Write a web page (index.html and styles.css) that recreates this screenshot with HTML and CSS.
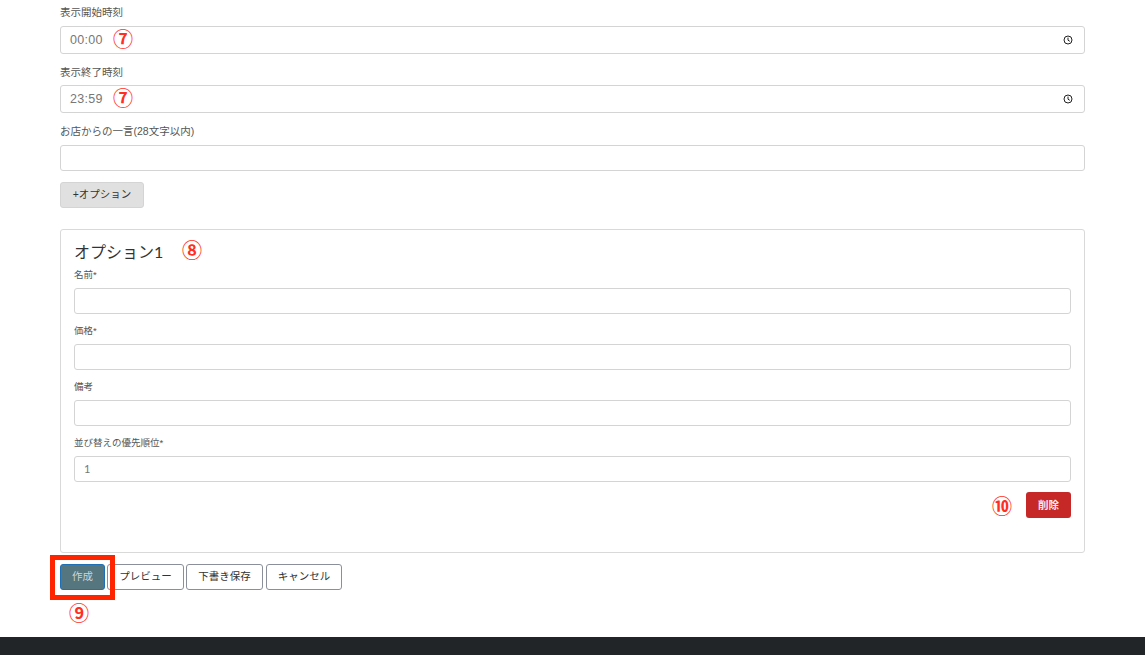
FILE: index.html
```html
<!DOCTYPE html>
<html lang="ja">
<head>
    <meta charset="UTF-8">
    <meta name="viewport" content="width=device-width, initial-scale=1.0">
    <title>オプション</title>
    <link rel="stylesheet" href="styles.css">
</head>
<body>
    <main class="page">
        <div class="form-group">
            <label>表示開始時刻</label>
            <div class="time-input">
                <span>00:00</span>
                <svg class="clock" viewBox="0 0 10 10"><circle cx="5" cy="5" r="4"/><path d="M5 2.6V5.2L6.8 6.3"/></svg>
                <span class="mark mark-time">⑦</span>
            </div>
        </div>
        <div class="form-group">
            <label>表示終了時刻</label>
            <div class="time-input">
                <span>23:59</span>
                <svg class="clock" viewBox="0 0 10 10"><circle cx="5" cy="5" r="4"/><path d="M5 2.6V5.2L6.8 6.3"/></svg>
                <span class="mark mark-time">⑦</span>
            </div>
        </div>
        <div class="form-group">
            <label>お店からの一言(28文字以内)</label>
            <input type="text" class="text-input">
        </div>
        <button type="button" class="btn btn-add">+オプション</button>

        <section class="option-card">
            <h2>オプション1<span class="mark mark-title">⑧</span></h2>
            <div class="card-group">
                <label>名前*</label>
                <input type="text" class="text-input">
            </div>
            <div class="card-group">
                <label>価格*</label>
                <input type="text" class="text-input">
            </div>
            <div class="card-group">
                <label>備考</label>
                <input type="text" class="text-input">
            </div>
            <div class="card-group">
                <label>並び替えの優先順位*</label>
                <input type="text" class="text-input" value="1">
            </div>
            <div class="card-actions">
                <span class="mark mark-delete">⑩</span>
                <button type="button" class="btn btn-delete">削除</button>
            </div>
        </section>

        <div class="actions">
            <button type="button" class="btn btn-create">作成</button>
            <button type="button" class="btn btn-outline">プレビュー</button>
            <button type="button" class="btn btn-outline">下書き保存</button>
            <button type="button" class="btn btn-outline btn-cancel">キャンセル</button>
            <span class="highlight"></span>
            <span class="mark mark-create">⑨</span>
        </div>
    </main>
    <footer class="footer"></footer>
</body>
</html>
```
FILE: styles.css
```css
* {
    margin: 0;
    padding: 0;
    box-sizing: border-box;
}

html, body {
    height: 655px;
    overflow: hidden;
}

body {
    font-family: Lato, "Noto Sans CJK JP", sans-serif;
    background: white;
    color: #333;
}

.page {
    padding: 5.4px 60px 0;
}

label {
    display: block;
    height: 14px;
    line-height: 14px;
    margin-bottom: 6.6px;
    font-family: "Liberation Sans", "Noto Sans CJK JP", sans-serif;
    font-size: 10.5px;
    color: #555;
}

.form-group {
    margin-bottom: 10.8px;
}

.time-input {
    position: relative;
    display: flex;
    align-items: center;
    justify-content: space-between;
    height: 28px;
    padding: 0 11px 0 9px;
    border: 1px solid #d4d4d4;
    border-radius: 3px;
    font-family: "Liberation Sans", sans-serif;
    font-size: 12.5px;
    letter-spacing: 0.3px;
    color: #777;
}

.clock {
    width: 10px;
    height: 10px;
    fill: none;
    stroke: #222;
    stroke-width: 1;
}

.text-input {
    display: block;
    width: 100%;
    height: 26px;
    padding: 0 9px;
    border: 1px solid #d4d4d4;
    border-radius: 3px;
    font-family: Lato, "Noto Sans CJK JP", sans-serif;
    font-size: 11px;
    color: #777;
    outline: none;
}

.btn {
    height: 26px;
    padding-bottom: 3px;
    border: 1px solid transparent;
    border-radius: 3px;
    background: white;
    font-family: Lato, "Noto Sans CJK JP", sans-serif;
    font-size: 10.5px;
    color: #333;
}

.btn-add {
    display: block;
    width: 84px;
    background: #e0e0e0;
    border-color: #d4d4d4;
}

.option-card {
    height: 324px;
    margin-top: 21px;
    padding: 8px 13px 0;
    border: 1px solid #d9d9d9;
    border-radius: 3px;
}

.option-card h2 {
    position: relative;
    height: 30px;
    line-height: 28px;
    font-size: 16px;
    font-weight: 400;
    color: #333;
}

.card-group {
    margin-bottom: 10px;
}

.card-group label {
    height: 13px;
    line-height: 13px;
    margin-bottom: 7px;
    font-size: 9.5px;
}

.card-actions {
    position: relative;
    display: flex;
    justify-content: flex-end;
}

.btn-delete {
    width: 45px;
    padding-bottom: 0;
    background: #c62828;
    color: #fbeaea;
    font-weight: 700;
}

.actions {
    position: relative;
    display: flex;
    gap: 2px;
    margin-top: 11px;
}

.btn-create {
    width: 45px;
    background: #55757f;
    border-color: #1f6fb5;
    color: #ccd6da;
}

.btn-outline {
    width: 77px;
    border-color: #8a8f99;
}

.btn-cancel {
    width: 76px;
    margin-left: 1px;
}

.highlight {
    position: absolute;
    left: -10px;
    top: -9px;
    width: 65px;
    height: 45px;
    border: 5px solid #ff2400;
}

.mark {
    position: absolute;
    width: 22px;
    height: 24px;
    line-height: 24px;
    text-align: center;
    font-family: "Noto Sans CJK JP", sans-serif;
    font-size: 20px;
    font-weight: 700;
    letter-spacing: 0;
    color: #ff2f24;
}

.mark-time {
    left: 51px;
    top: 0;
}

.mark-title {
    left: 107px;
    top: 0;
}

.mark-delete {
    left: 917px;
    top: 2px;
}

.mark-create {
    left: 8px;
    top: 37px;
}

.footer {
    height: 18px;
    margin-top: 47px;
    background: #222528;
}
```
